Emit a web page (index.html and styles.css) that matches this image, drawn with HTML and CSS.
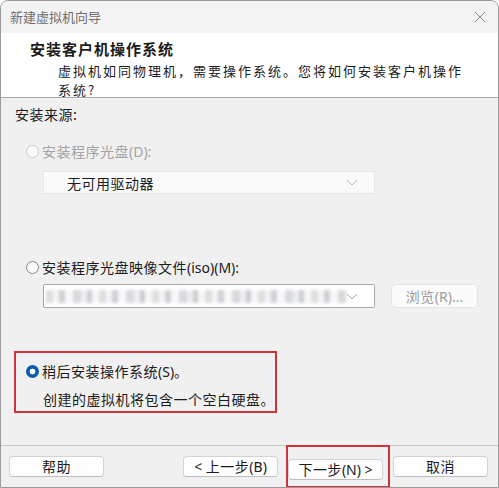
FILE: index.html
```html
<!DOCTYPE html>
<html lang="zh-CN">
<head>
  <meta charset="UTF-8">
  <meta name="viewport" content="width=device-width, initial-scale=1.0">
  <title>新建虚拟机向导</title>
  <link rel="stylesheet" href="styles.css">
</head>
<body>

  <div class="window">
    <div class="titlebar">
      <span class="title">新建虚拟机向导</span>
      <svg class="close" width="12" height="12" viewBox="0 0 12 12">
        <path d="M1 1 L11 11 M11 1 L1 11" stroke="#8c8c8c" stroke-width="1" fill="none"/>
      </svg>
    </div>

    <div class="header">
      <div class="header-title">安装客户机操作系统</div>
      <div class="header-sub">虚拟机如同物理机，需要操作系统。您将如何安装客户机操作<br>系统?</div>
    </div>

    <div class="content">
      <div class="group-label">安装来源:</div>

      <div class="radio-row disabled">
        <span class="radio"></span>
        <span>安装程序光盘<span class="latin">(D):</span></span>
      </div>
      <div class="select disabled-select">
        <span class="select-text">无可用驱动器</span>
        <svg class="chevron" width="12" height="7" viewBox="0 0 12 7">
          <path d="M1 1 L6 6 L11 1" stroke="#b4b4b4" stroke-width="1" fill="none"/>
        </svg>
      </div>

      <div class="radio-row iso-row">
        <span class="radio"></span>
        <span>安装程序光盘映像文件<span class="latin">(iso)(M):</span></span>
      </div>
      <div class="iso-line">
        <div class="select path-select">
          <div class="blurred"></div>
          <svg class="chevron" width="12" height="7" viewBox="0 0 12 7">
            <path d="M1 1 L6 6 L11 1" stroke="#a8a8a8" stroke-width="1" fill="none"/>
          </svg>
        </div>
        <button class="btn btn-disabled" type="button">浏览<span class="latin">(R)...</span></button>
      </div>

      <div class="later-box">
        <div class="radio-row">
          <span class="radio checked"></span>
          <span>稍后安装操作系统<span class="latin">(S)</span>。</span>
        </div>
        <div class="later-note">创建的虚拟机将包含一个空白硬盘。</div>
      </div>
    </div>

    <div class="footer">
      <button class="btn" type="button">帮助</button>
      <div class="nav">
        <button class="btn" type="button"><span class="latin">&lt;</span> 上一步<span class="latin">(B)</span></button>
        <span class="marked">
          <button class="btn" type="button">下一步<span class="latin">(N) &gt;</span></button>
        </span>
        <button class="btn" type="button">取消</button>
      </div>
    </div>
  </div>

</body>
</html>
```

FILE: styles.css
```css
body {
  margin: 0;
  font-family: "Noto Sans CJK SC", "Noto Sans", sans-serif;
  color: #1b1b1b;
  background-color: #ffffff;
}

.window {
  width: 499px;
  height: 488px;
  box-sizing: border-box;
  border: 1px solid #9a9a9a;
  border-radius: 8px 8px 0 0;
  background-color: #f0f0f0;
  display: flex;
  flex-direction: column;
  overflow: hidden;
}

.latin {
  font-family: "Noto Sans", "Noto Sans CJK SC", sans-serif;
  letter-spacing: 0;
}

/* title bar */
.titlebar {
  height: 32px;
  flex-shrink: 0;
  background-color: #f3f3f3;
  display: flex;
  align-items: center;
  justify-content: space-between;
  padding: 0 12px 0 9px;
}

.title {
  font-size: 13px;
  color: #6e6e6e;
  line-height: 16px;
}

/* header */
.header {
  height: 65px;
  flex-shrink: 0;
  box-sizing: border-box;
  background-color: #ffffff;
  border-bottom: 1px solid #a9a9a9;
  padding-top: 5px;
}

.header-title {
  font-size: 15px;
  font-weight: bold;
  letter-spacing: 1px;
  line-height: 22px;
  padding-left: 29px;
}

.header-sub {
  font-size: 13px;
  letter-spacing: 2px;
  line-height: 19px;
  padding-left: 57px;
  margin-top: 1px;
}

/* content */
.content {
  flex: 1;
  padding: 6px 0 0 13px;
  font-size: 14px;
  letter-spacing: 0.5px;
}

.group-label {
  line-height: 20px;
  padding-left: 1px;
}

.radio-row {
  display: flex;
  align-items: center;
  gap: 3px;
  height: 20px;
  line-height: 20px;
  margin-top: 17px;
  padding-left: 12px;
}

.radio-row.disabled {
  color: #a3a3a3;
}

.radio {
  width: 13px;
  height: 13px;
  box-sizing: border-box;
  border-radius: 50%;
  border: 1px solid #858585;
  background-color: #fbfbfb;
}

.disabled .radio {
  border-color: #cacaca;
}

.radio.checked {
  border: none;
  background: radial-gradient(circle, #ffffff 0 2.6px, #0b5cad 3.2px);
}

.select {
  width: 332px;
  height: 23px;
  box-sizing: border-box;
  margin-left: 29px;
  display: flex;
  align-items: center;
  justify-content: space-between;
  padding: 0 16px 0 23px;
}

.disabled-select {
  margin-top: 10px;
  background-color: #fafafa;
  border: 1px solid #e6e6e6;
}

.select-text {
  line-height: 20px;
}

.iso-row {
  margin-top: 63px;
}

.iso-line {
  display: flex;
  align-items: center;
  gap: 16px;
  margin-top: 7px;
}

.path-select {
  height: 24px;
  background-color: #ffffff;
  border: 1px solid #a8a8a8;
  border-radius: 2px;
  padding: 0 16px 0 2px;
}

.blurred {
  width: 300px;
  height: 13px;
  background:
    repeating-linear-gradient(90deg, #d6d6d6 0 7px, #f2f2f2 7px 13px, #c3c5cd 13px 19px, #f7f7f7 19px 27px, #cfd1d6 27px 35px, #e8eaef 35px 41px, #bfc1c7 41px 46px, #f5f5f5 46px 53px);
  filter: blur(1.4px);
  opacity: 0.8;
}

/* later box */
.later-box {
  width: 263px;
  box-sizing: border-box;
  border: 2px solid #d0323d;
  margin-top: 43px;
  padding: 8px 0 2px 10px;
}

.later-box .radio-row {
  margin-top: 0;
  padding-left: 0;
}

.later-note {
  line-height: 20px;
  margin-top: 8px;
  padding-left: 17px;
}

/* buttons */
.btn {
  width: 95px;
  height: 21px;
  padding: 0;
  font-family: "Noto Sans CJK SC", "Noto Sans", sans-serif;
  font-size: 14px;
  letter-spacing: 0.5px;
  line-height: 19px;
  color: #1b1b1b;
  background-color: #fdfdfd;
  border: 1px solid #d3d3d3;
  border-bottom-color: #bdbdbd;
  border-radius: 4px;
}

.btn-disabled {
  width: 87px;
  height: 24px;
  color: #9c9c9c;
  background-color: #fbfbfb;
  border: 1px solid #e4e4e4;
}

.footer {
  height: 42px;
  flex-shrink: 0;
  box-sizing: border-box;
  border-top: 1px solid #c9c9c9;
  display: flex;
  justify-content: space-between;
  padding: 10px 10px 0 8px;
}

.nav {
  display: flex;
  gap: 10px;
}

.marked {
  position: relative;
}

.marked::after {
  content: "";
  position: absolute;
  left: -2px;
  right: -7px;
  top: -11px;
  bottom: -1px;
  border: 2px solid #d0323d;
  pointer-events: none;
}
```
